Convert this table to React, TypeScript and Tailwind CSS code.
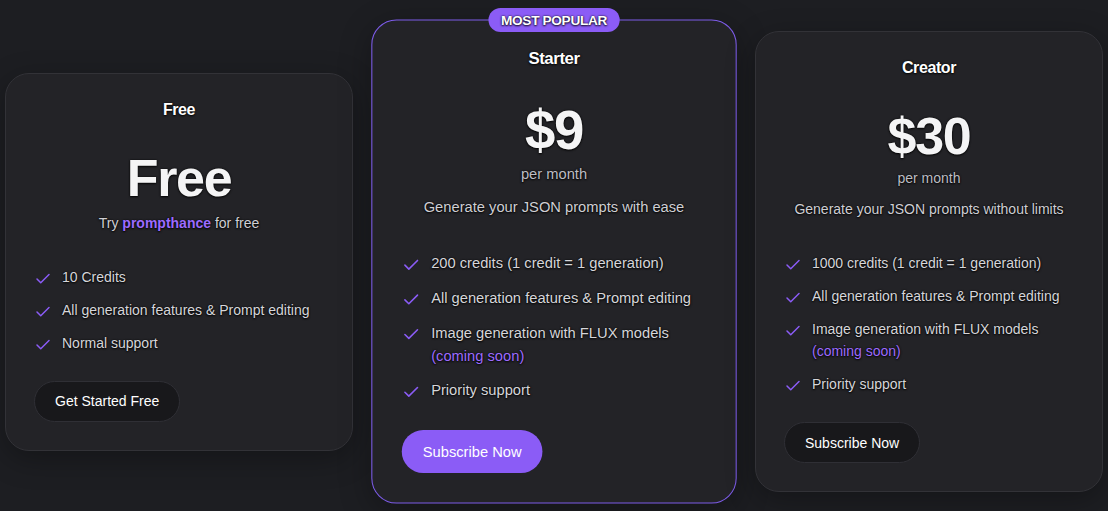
import { Check } from 'lucide-react'

type Plan = {
  name: string
  price: string
  period?: string
  blurb: React.ReactNode
  features: { text: string; note?: string }[]
  cta: string
  popular?: boolean
}

const plans: Plan[] = [
  {
    name: 'Free',
    price: 'Free',
    blurb: (
      <>
        Try <span className="font-bold text-[#9d6bff]">prompthance</span> for free
      </>
    ),
    features: [
      { text: '10 Credits' },
      { text: 'All generation features & Prompt editing' },
      { text: 'Normal support' },
    ],
    cta: 'Get Started Free',
  },
  {
    name: 'Starter',
    price: '$9',
    period: 'per month',
    blurb: 'Generate your JSON prompts with ease',
    features: [
      { text: '200 credits (1 credit = 1 generation)' },
      { text: 'All generation features & Prompt editing' },
      { text: 'Image generation with FLUX models', note: '(coming soon)' },
      { text: 'Priority support' },
    ],
    cta: 'Subscribe Now',
    popular: true,
  },
  {
    name: 'Creator',
    price: '$30',
    period: 'per month',
    blurb: 'Generate your JSON prompts without limits',
    features: [
      { text: '1000 credits (1 credit = 1 generation)' },
      { text: 'All generation features & Prompt editing' },
      { text: 'Image generation with FLUX models', note: '(coming soon)' },
      { text: 'Priority support' },
    ],
    cta: 'Subscribe Now',
  },
]

function PlanCard({ plan }: { plan: Plan }) {
  return (
    <div
      className={
        'relative flex flex-col rounded-3xl bg-[#232327] px-7 pt-6 pb-7 shadow-[0_8px_30px_rgba(0,0,0,0.3)] ' +
        (plan.popular ? 'scale-105 border border-[#7d5ce8]' : 'border border-[#323237]')
      }
    >
      {plan.popular && (
        <div className="absolute -top-[12px] left-1/2 -translate-x-1/2 rounded-full bg-[#8b5cf6] px-3 py-[3px] text-[13px] leading-[17px] font-bold tracking-tight text-white uppercase">
          Most Popular
        </div>
      )}

      <h3 className="text-center text-base leading-6 font-bold tracking-tight text-white">
        {plan.name}
      </h3>

      <div className="mt-[30px] text-center text-[52px] leading-none font-bold tracking-tight text-[#f4f4f5]">
        {plan.price}
      </div>

      {plan.period && (
        <p className="mt-1.5 text-center text-sm leading-5 text-[#bdbdc3]">{plan.period}</p>
      )}

      <p className={(plan.period ? 'mt-[11px]' : 'mt-[9px]') + ' text-center text-sm leading-5 text-[#cfcfd4]'}>
        {plan.blurb}
      </p>

      <ul className="mt-[33px] flex flex-col gap-[11px]">
        {plan.features.map((f) => (
          <li key={f.text} className="flex items-start gap-[10px] text-sm leading-[22px] text-[#d6d6da]">
            <Check className="mt-[4px] h-[18px] w-[18px] shrink-0 text-[#8b5cf6]" strokeWidth={2} />
            <span>
              {f.text}
              {f.note && <span className="block text-[#9d6bff]">{f.note}</span>}
            </span>
          </li>
        ))}
      </ul>

      <div className="mt-[27px]">
        <button
          className={
            'h-[41px] rounded-full px-5 text-sm ' +
            (plan.popular
              ? 'bg-[#8b5cf6] text-white'
              : 'border border-[#2f2f35] bg-[#18181b] text-white')
          }
        >
          {plan.cta}
        </button>
      </div>
    </div>
  )
}

export default function App() {
  return (
    <div
      className="h-[511px] w-full bg-[#1d1e22] pt-3 [text-shadow:0_0_2px_rgba(0,0,0,0.9),0_1px_2px_rgba(0,0,0,0.8)]"
      style={{ fontFamily: '"Liberation Sans", Arial, sans-serif' }}
    >
      <div className="grid h-full grid-cols-3 items-center gap-[27px] px-[5px]">
        {plans.map((p) => (
          <PlanCard key={p.name} plan={p} />
        ))}
      </div>
    </div>
  )
}
